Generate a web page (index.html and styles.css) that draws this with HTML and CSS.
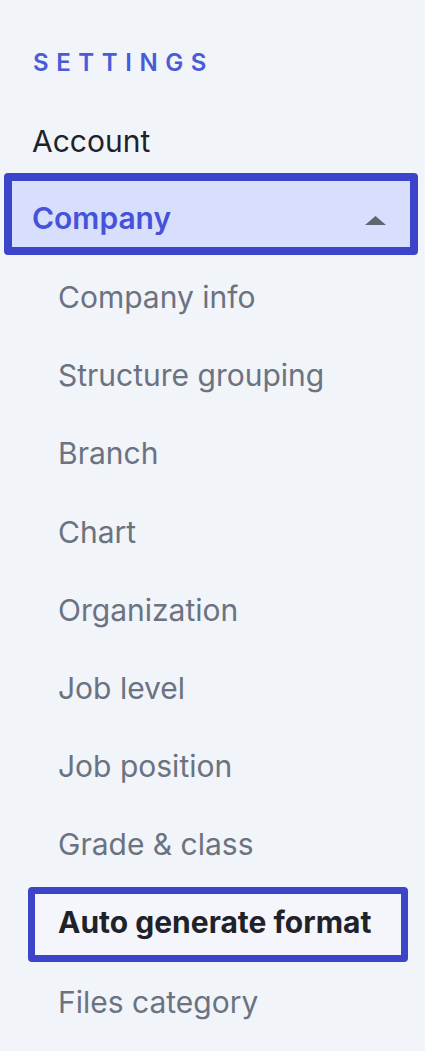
FILE: index.html
```html
<!DOCTYPE html>
<html lang="en">
<head>
<meta charset="utf-8">
<title>Settings</title>
<link rel="stylesheet" href="styles.css">
</head>
<body>
<nav class="sidebar">
  <div class="heading">SETTINGS</div>
  <div class="item">Account</div>
  <div class="group">
    <div class="group-head">
      <span class="group-label">Company</span>
      <svg class="caret" width="21" height="9" viewBox="0 0 21 9"><path d="M0 9 L10.5 0 L21 9 Z" fill="#5f6670"/></svg>
    </div>
  </div>
  <ul class="sub">
    <li>Company info</li>
    <li>Structure grouping</li>
    <li>Branch</li>
    <li>Chart</li>
    <li>Organization</li>
    <li>Job level</li>
    <li>Job position</li>
    <li>Grade &amp; class</li>
    <li class="current">Auto generate format</li>
    <li>Files category</li>
  </ul>
</nav>
</body>
</html>
```
FILE: styles.css
```css
html, body {
  margin: 0;
  padding: 0;
  background: #f1f4f9;
}
body {
  font-family: Inter, "Noto Sans", "Liberation Sans", sans-serif;
  width: 425px;
  height: 1051px;
  overflow: hidden;
}
.sidebar {
  padding-top: 48px;
}
.heading {
  padding-left: 33px;
  font-size: 24px;
  line-height: 30px;
  font-weight: 600;
  letter-spacing: 7.6px;
  color: #4a5bd9;
}
.item {
  margin-top: 43px;
  padding-left: 32px;
  font-size: 30px;
  line-height: 40px;
  color: #1f2329;
}
.group {
  margin: 11.5px 7px 0 4px;
}
.group-head {
  box-sizing: border-box;
  height: 82px;
  border: 8px solid #3c45c9;
  border-radius: 4px;
  background: #d8dffc;
  display: flex;
  align-items: center;
  justify-content: space-between;
  padding: 17.5px 24px 8.5px 20px;
}
.group-label {
  font-size: 30px;
  line-height: 40px;
  font-weight: 600;
  color: #4652d8;
}
.caret {
  display: block;
  margin-top: 5px;
}
.sub {
  list-style: none;
  margin: 3.5px 0 0;
  padding: 0;
}
.sub li {
  height: 78.2px;
  line-height: 78.2px;
  padding-left: 58px;
  font-size: 30px;
  color: #6b7280;
  white-space: nowrap;
}
.sub li.current {
  box-sizing: border-box;
  height: 75px;
  line-height: 56px;
  margin: 3.8px 17px 0.6px 28px;
  padding-left: 23px;
  border: 7px solid #3c45c9;
  border-radius: 4px;
  background: #f4f6fb;
  font-weight: 700;
  color: #1f2329;
}
```
